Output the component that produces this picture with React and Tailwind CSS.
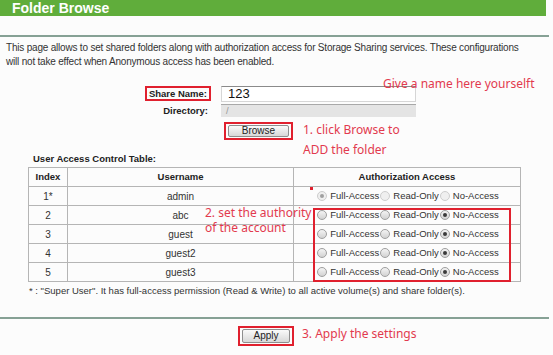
import React from 'react';

const users = [
  { index: '1*', name: 'admin', access: 'full', disabled: true },
  { index: '2', name: 'abc', access: 'none' },
  { index: '3', name: 'guest', access: 'none' },
  { index: '4', name: 'guest2', access: 'none' },
  { index: '5', name: 'guest3', access: 'none' }
];

function Radio({ checked, disabled }) {
  return (
    <span
      className={`inline-flex items-center justify-center w-[10px] h-[10px] rounded-full border ${
        disabled ? 'border-[#cdcdcd] bg-[#efefef]' : 'border-[#a0a0a0] bg-gradient-to-b from-[#f4f4f4] to-[#d2d2d2]'
      }`}
    >
      {checked ? (
        <span className={`w-[4px] h-[4px] rounded-full ${disabled ? 'bg-[#a0a0a0]' : 'bg-[#3a3a3a]'}`} />
      ) : null}
    </span>
  );
}

function AccessOptions({ access, disabled }) {
  const opts = [
    { key: 'full', label: 'Full-Access' },
    { key: 'read', label: 'Read-Only' },
    { key: 'none', label: 'No-Access' }
  ];
  return (
    <div className="flex items-center justify-center gap-[1px] pl-[2px] text-[9.5px]">
      {opts.map((o) => (
        <span key={o.key} className="flex items-center gap-[3px]">
          <Radio checked={access === o.key} disabled={disabled} />
          <span>{o.label}</span>
        </span>
      ))}
    </div>
  );
}

function GreyButton({ children, className = '' }) {
  return (
    <button
      type="button"
      className={`border border-[#8e8e8e] rounded-[2px] bg-gradient-to-b from-[#fafafa] to-[#d8d8d8] text-[10px] text-[#222] leading-none ${className}`}
    >
      {children}
    </button>
  );
}

export default function App() {
  const note = "absolute text-[12px] leading-[15px] text-[#e23a4e] font-['Noto_Sans',sans-serif]";
  return (
    <div className="relative w-[553px] h-[355px] overflow-hidden bg-[#fcfcfc] text-[#333] font-['Liberation_Sans',Arial,sans-serif]">
      <div className="w-[546px] h-[16px] bg-[#60ad3b] pl-[12px] text-white font-bold text-[14px] leading-[16px]">
        Folder Browse
      </div>
      <div className="mt-[19px] w-[549px] h-[2px] bg-[#86a195]" />

      <p className="px-[6px] pt-[4px] text-[10px] tracking-[-0.2px] leading-[14px] whitespace-nowrap">
        This page allows to set shared folders along with authorization access for Storage Sharing services. These configurations
        <br />
        will not take effect when Anonymous access has been enabled.
      </p>

      <div className="mt-[17px] grid grid-cols-[211px_195px] gap-x-[10px] text-[9.5px]">
        <div className="flex justify-end">
          <span className="border-2 border-[#e0202e] px-[2px] h-[15px] leading-[11px] font-bold text-[#222]">Share Name:</span>
        </div>
        <div className="h-[16px] bg-white border border-[#d6d6d6] border-t-[#8a8a8a] pl-[6px] text-[13px] leading-[14px] text-[#111]">
          123
        </div>
        <div className="flex justify-end pr-[3px] mt-[2px] font-bold leading-[13px] text-[#222]">Directory:</div>
        <div className="mt-[2px] h-[13px] bg-[#e4e4e4] border-t border-[#a8a8a8] pl-[5px] leading-[11px] text-[#999]">/</div>
        <div />
        <div className="mt-[5px] ml-[3px]">
          <span className="inline-flex w-[69px] h-[18px] border-2 border-[#e0202e] items-center justify-center">
            <GreyButton className="w-[61px] h-[12px]">Browse</GreyButton>
          </span>
        </div>
      </div>

      <div className="mt-[13px] ml-[33px] font-bold text-[9.5px] leading-[12px] text-[#222]">User Access Control Table:</div>

      <table className="mt-[2px] ml-[28px] w-[493px] border-collapse text-[10px] text-center">
        <thead>
          <tr className="h-[19px] text-[9.5px]">
            <th className="w-[39px] border border-[#b5b5b5] font-bold text-[#222]">Index</th>
            <th className="w-[226px] border border-[#b5b5b5] font-bold text-[#222]">Username</th>
            <th className="border border-[#b5b5b5] font-bold text-[#222]">Authorization Access</th>
          </tr>
        </thead>
        <tbody>
          {users.map((u) => (
            <tr key={u.index} className="h-[19px]">
              <td className="border border-[#b5b5b5] p-0">{u.index}</td>
              <td className="border border-[#b5b5b5] p-0">{u.name}</td>
              <td className="border border-[#b5b5b5] p-0">
                <AccessOptions access={u.access} disabled={u.disabled} />
              </td>
            </tr>
          ))}
        </tbody>
      </table>

      <p className="mt-[2px] ml-[29px] text-[9.5px] leading-[14px]">
        * : "Super User". It has full-access permission (Read &amp; Write) to all active volume(s) and share folder(s).
      </p>

      <div className="mt-[19px] w-[549px] h-[2px] bg-[#86a195]" />

      <div className="mt-[3px] ml-[238px]">
        <span className="inline-flex w-[56px] h-[20px] border-2 border-[#e0202e] items-center justify-center">
          <GreyButton className="w-[48px] h-[14px]">Apply</GreyButton>
        </span>
      </div>

      {/* annotations drawn over the screenshot */}
      <div className={`${note} left-[383px] top-[76px] text-[11.5px]`}>Give a name here yourselft</div>
      <div className={`${note} left-[303px] top-[122px]`}>1. click Browse to</div>
      <div className={`${note} left-[303px] top-[142px]`}>ADD the folder</div>
      <div className={`${note} left-[205px] top-[205px]`}>2. set the authority</div>
      <div className={`${note} left-[205px] top-[220px]`}>of the account</div>
      <div className="absolute left-[310px] top-[187px] w-[3px] h-[3px] bg-[#e0202e]" />
      <div className="absolute left-[313px] top-[208px] w-[198px] h-[74px] border-2 border-[#e0202e]" />
      <div className={`${note} left-[302px] top-[326px] text-[11.5px]`}>3. Apply the settings</div>
    </div>
  );
}
